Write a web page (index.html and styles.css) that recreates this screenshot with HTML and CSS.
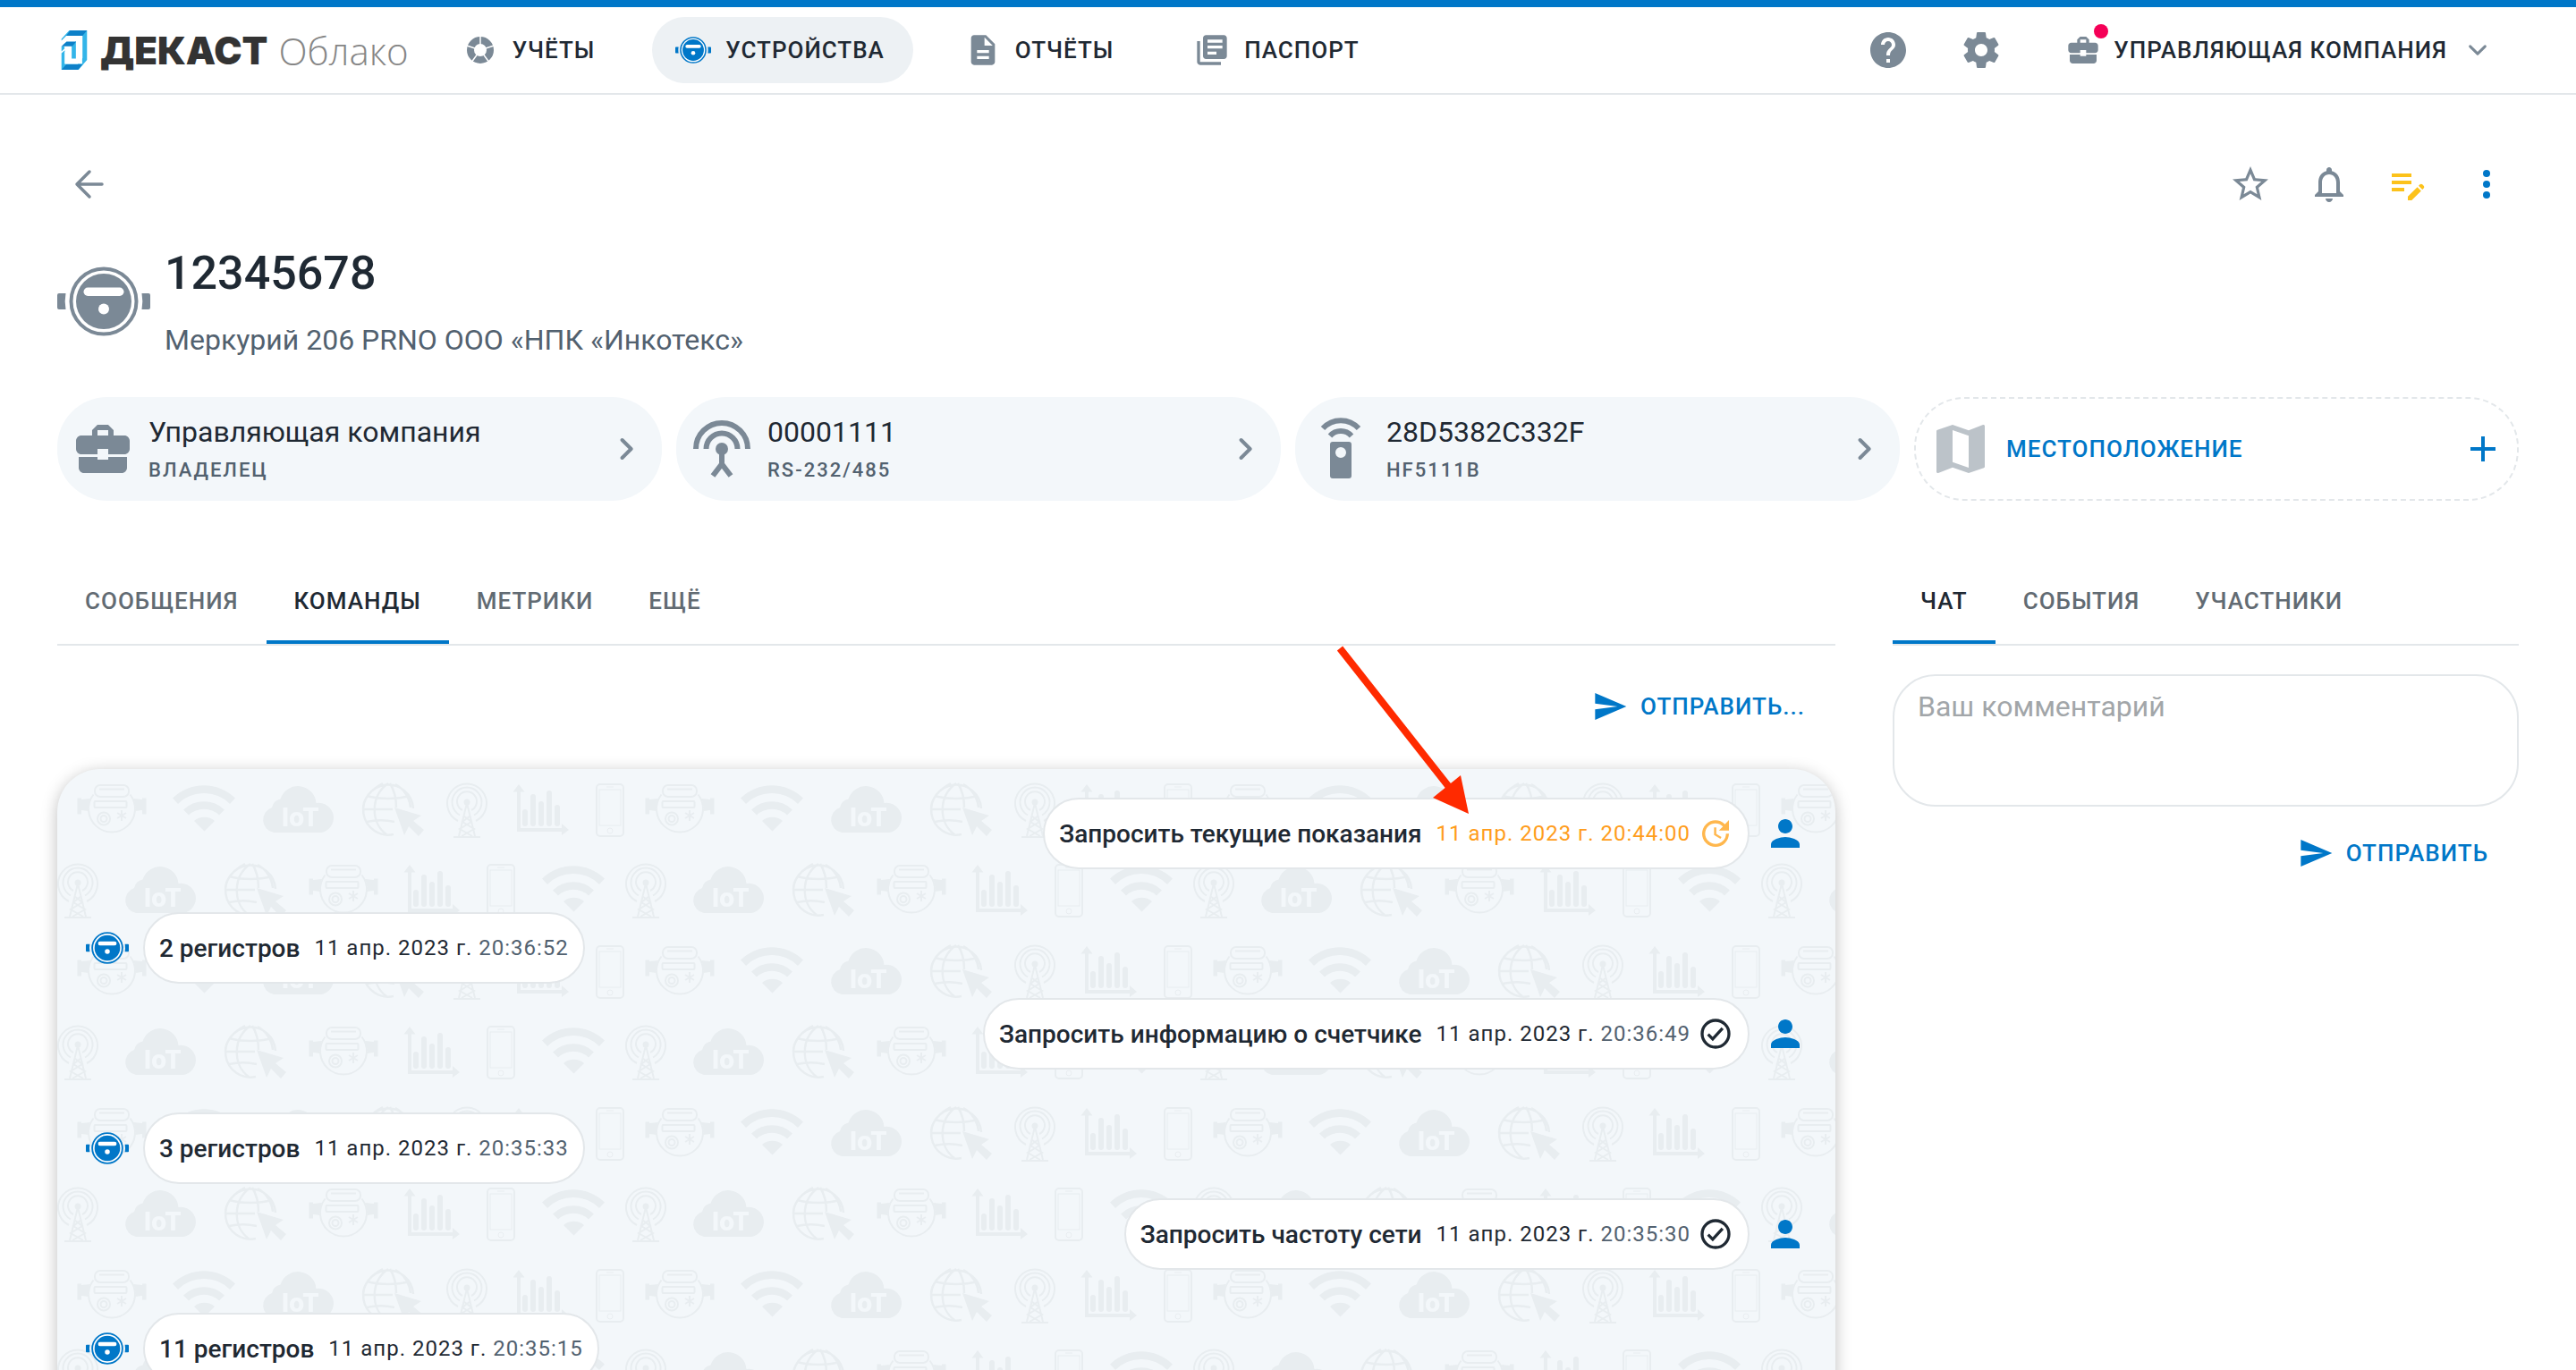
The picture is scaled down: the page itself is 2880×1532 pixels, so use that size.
FILE: index.html
```html
<!DOCTYPE html>
<html lang="ru">
<head>
<meta charset="utf-8">
<title>12345678 — ДЕКАСТ Облако</title>
<meta name="viewport" content="width=device-width, initial-scale=1">
<link rel="stylesheet" href="styles.css">
</head>
<body>
<svg class="sprite" aria-hidden="true">
  <symbol id="i-device" viewBox="0 0 104 78">
    <circle cx="52" cy="39" r="36.500" fill="#fff" stroke="currentColor" stroke-width="4"/>
    <circle cx="52" cy="39" r="31" fill="currentColor"/>
    <rect x="29.500" y="23.500" width="45" height="9.500" rx="4.700" fill="#fff"/>
    <circle cx="52" cy="47.500" r="6" fill="#fff"/>
    <path fill="currentColor" d="M9.500 30H2a2 2 0 0 0-2 2v14a2 2 0 0 0 2 2h7.500a50 50 0 0 1 0-18zM94.500 30h7.500a2 2 0 0 1 2 2v14a2 2 0 0 1-2 2h-7.500a50 50 0 0 0 0-18z"/>
  </symbol>
  <symbol id="i-case" viewBox="0 0 24 24"><path fill="currentColor" d="M10 16v-1H3.010L3 19c0 1.110.890 2 2 2h14c1.110 0 2-.890 2-2v-4h-7v1h-4zm10-9h-4.010V5l-2-2h-4l-2 2v2H4c-1.100 0-2 .900-2 2v3c0 1.110.890 2 2 2h6v-2h4v2h6c1.100 0 2-.900 2-2V9c0-1.100-.900-2-2-2zm-6 0h-4V5h4v2z"/></symbol>
  <symbol id="i-send" viewBox="0 0 24 24"><path fill="currentColor" d="M2.010 21L23 12 2.010 3 2 10l15 2-15 2z"/></symbol>
  <symbol id="i-right" viewBox="0 0 24 24"><path fill="none" stroke="currentColor" stroke-width="2" stroke-linecap="round" stroke-linejoin="round" d="M9.800 7l5 5-5 5"/></symbol>
  <symbol id="i-person" viewBox="0 0 24 24"><path fill="currentColor" d="M12 12c2.210 0 4-1.790 4-4s-1.790-4-4-4-4 1.790-4 4 1.790 4 4 4zm0 2c-2.670 0-8 1.340-8 4v2h16v-2c0-2.660-5.330-4-8-4z"/></symbol>
  <symbol id="i-done" viewBox="0 0 24 24"><circle cx="12" cy="12" r="9" fill="none" stroke="currentColor" stroke-width="2"/><path fill="none" stroke="currentColor" stroke-width="2" d="M7 12.400l3.100 3.100 6.600-7.200"/></symbol>
  <symbol id="i-wait" viewBox="0 0 24 24"><path fill="currentColor" d="M21 10.120h-6.780l2.740-2.820c-2.730-2.700-7.150-2.800-9.880-.100-2.730 2.710-2.730 7.080 0 9.790s7.150 2.710 9.880 0C18.320 15.650 19 14.080 19 12.100h2c0 1.980-.880 4.550-2.640 6.290-3.510 3.480-9.210 3.480-12.720 0-3.500-3.470-3.530-9.110-.020-12.580s9.140-3.470 12.650 0L21 3v7.120zM12.500 8v4.250l3.500 2.080-.720 1.210L11 13V8h1.500z"/></symbol>
</svg>

<div class="app">
  <header class="header">
    <a class="logo" href="#">
      <svg class="logo-mark" viewBox="0 0 85 131" aria-hidden="true">
        <path fill="#33b5e9" d="M0 28L26 0h59v98l-28 33H0V76l11-10v45h58V18H16L0 34z"/>
        <path fill="#fff" d="M16 18h54v74L54 112H11V72l17-14v36h6l18-1V36H16z"/>
        <path fill="#33b5e9" d="M34 52l14-16v58H34zM0 53v17l10-9v-8z"/>
        <path fill="#0d80c8" d="M16 18L29 0h56L70 18zM0 131l16-18h54l-15 18zM0 53l17-16h32L36 53z"/>
      </svg>
      <span class="logo-name">ДЕКАСТ</span>
      <span class="logo-sub">Облако</span>
    </a>
    <nav class="nav">
      <a class="nav-item" href="#">
        <svg class="icon-40" viewBox="0 0 40 40" aria-hidden="true"><circle cx="20" cy="20" r="11" fill="none" stroke="currentColor" stroke-width="8"/><path stroke="#fff" stroke-width="1.500" d="M20 20V4M20 20L4.800 15M20 20L10.600 33M20 20l9.400 13M20 20l15.200-5"/></svg>
        УЧЁТЫ</a>
      <a class="nav-item active" href="#" aria-current="page"><svg class="icon-40 blue" aria-hidden="true"><use href="#i-device"/></svg>УСТРОЙСТВА</a>
      <a class="nav-item" href="#">
        <svg class="icon-40" viewBox="0 0 24 24" aria-hidden="true"><path fill="currentColor" d="M14 2H6c-1.100 0-1.990.900-1.990 2L4 20c0 1.100.890 2 1.990 2H18c1.100 0 2-.900 2-2V8l-6-6zm2 16H8v-2h8v2zm0-4H8v-2h8v2zm-3-5V3.500L18.500 9H13z"/></svg>
        ОТЧЁТЫ</a>
      <a class="nav-item" href="#">
        <svg class="icon-40" viewBox="0 0 24 24" aria-hidden="true"><path fill="currentColor" d="M4 6H2v14c0 1.100.900 2 2 2h14v-2H4V6zm16-4H8c-1.100 0-2 .900-2 2v12c0 1.100.900 2 2 2h12c1.100 0 2-.900 2-2V4c0-1.100-.900-2-2-2zm-1 9H9V9h10v2zm-4 4H9v-2h6v2zm4-8H9V5h10v2z"/></svg>
        ПАСПОРТ</a>
    </nav>
    <div class="header-tools">
      <button class="tool" type="button" aria-label="Помощь"><svg class="icon-48" viewBox="0 0 24 24"><path fill="currentColor" d="M12 2C6.480 2 2 6.480 2 12s4.480 10 10 10 10-4.480 10-10S17.520 2 12 2zm1 17h-2v-2h2v2zm2.070-7.750l-.900.920C13.450 12.900 13 13.500 13 15h-2v-.500c0-1.100.450-2.100 1.170-2.830l1.240-1.260c.370-.360.590-.860.590-1.410 0-1.100-.900-2-2-2s-2 .900-2 2H8c0-2.210 1.790-4 4-4s4 1.790 4 4c0 .880-.360 1.680-.930 2.250z"/></svg></button>
      <button class="tool" type="button" aria-label="Настройки"><svg class="icon-48" viewBox="0 0 24 24"><path fill="currentColor" d="M19.430 12.980c.040-.320.070-.640.070-.980s-.030-.660-.070-.980l2.110-1.650c.190-.150.240-.420.120-.640l-2-3.460c-.120-.220-.390-.300-.610-.220l-2.490 1c-.520-.400-1.080-.730-1.690-.980l-.380-2.650C14.460 2.180 14.250 2 14 2h-4c-.250 0-.460.180-.490.420l-.380 2.650c-.610.250-1.170.590-1.690.980l-2.490-1c-.230-.090-.490 0-.610.220l-2 3.460c-.130.220-.070.490.120.640l2.110 1.650c-.040.320-.070.650-.070.980s.030.660.070.980l-2.110 1.650c-.190.150-.240.420-.120.640l2 3.460c.120.220.390.300.610.220l2.490-1c.520.400 1.080.730 1.690.980l.380 2.650c.030.240.240.420.490.420h4c.250 0 .460-.180.490-.420l.380-2.650c.610-.250 1.170-.590 1.690-.980l2.490 1c.230.090.490 0 .610-.220l2-3.460c.120-.220.070-.490-.120-.640l-2.110-1.650zM12 15.500c-1.930 0-3.500-1.570-3.500-3.500s1.570-3.500 3.500-3.500 3.500 1.570 3.500 3.500-1.570 3.500-3.500 3.500z"/></svg></button>
      <button class="account" type="button">
        <span class="account-icon"><svg class="icon-40" aria-hidden="true"><use href="#i-case"/></svg><span class="badge"></span></span>
        УПРАВЛЯЮЩАЯ КОМПАНИЯ
        <svg class="icon-40" viewBox="0 0 24 24" aria-hidden="true"><path fill="none" stroke="currentColor" stroke-width="1.800" stroke-linecap="round" stroke-linejoin="round" d="M7 9.500l5 5 5-5"/></svg>
      </button>
    </div>
  </header>

  <main class="main">
    <div class="toolbar">
      <button class="icon-btn" type="button" aria-label="Назад"><svg class="icon-48" viewBox="0 0 48 48"><path fill="none" stroke="currentColor" stroke-width="3.500" stroke-linecap="round" stroke-linejoin="round" d="M24 10L10 24l14 14M10 24h28"/></svg></button>
      <div class="toolbar-actions">
        <button class="icon-btn" type="button" aria-label="В избранное"><svg class="icon-48" viewBox="0 0 24 24"><path fill="currentColor" d="M22 9.240l-7.190-.620L12 2 9.190 8.630 2 9.240l5.460 4.730L5.820 21 12 17.270 18.180 21l-1.630-7.030L22 9.240zM12 15.400l-3.760 2.270 1-4.280-3.320-2.880 4.380-.380L12 6.100l1.710 4.040 4.380.380-3.320 2.880 1 4.280L12 15.400z"/></svg></button>
        <button class="icon-btn" type="button" aria-label="Уведомления"><svg class="icon-48" viewBox="0 0 24 24"><path fill="currentColor" d="M12 22c1.100 0 2-.900 2-2h-4c0 1.100.900 2 2 2zm6-6v-5c0-3.070-1.630-5.640-4.500-6.320V4c0-.830-.670-1.500-1.500-1.500s-1.500.670-1.500 1.500v.680C7.640 5.360 6 7.920 6 11v5l-2 2v1h16v-1l-2-2zm-2 1H8v-6c0-2.480 1.510-4.500 4-4.500s4 2.020 4 4.500v6z"/></svg></button>
        <button class="icon-btn yellow" type="button" aria-label="Редактировать"><svg class="icon-48" viewBox="0 0 24 24"><path fill="currentColor" d="M3 10h11v2H3v-2zm0-2h11V6H3v2zm0 8h7v-2H3v2zm15.010-3.130l.710-.710c.390-.390 1.020-.390 1.410 0l.710.710c.390.390.390 1.020 0 1.410l-.710.710-2.120-2.120zm-.710.710l-5.300 5.300V21h2.120l5.300-5.300-2.120-2.120z"/></svg></button>
        <button class="icon-btn blue" type="button" aria-label="Ещё"><svg class="icon-48" viewBox="0 0 24 24"><g fill="currentColor"><circle cx="12" cy="6" r="2"/><circle cx="12" cy="12" r="2"/><circle cx="12" cy="18" r="2"/></g></svg></button>
      </div>
    </div>

    <div class="device">
      <svg class="device-icon" aria-hidden="true"><use href="#i-device"/></svg>
      <div class="device-text">
        <h1 class="device-title">12345678</h1>
        <p class="device-model">Меркурий 206 PRNO ООО «НПК «Инкотекс»</p>
      </div>
    </div>

    <div class="cards">
      <a class="card" href="#">
        <span class="card-icon"><svg class="icon-72" aria-hidden="true"><use href="#i-case"/></svg></span>
        <span class="card-text"><span class="card-name">Управляющая компания</span><span class="card-kind">ВЛАДЕЛЕЦ</span></span>
        <svg class="icon-48" aria-hidden="true"><use href="#i-right"/></svg>
      </a>
      <a class="card" href="#">
        <span class="card-icon"><svg class="icon-72" viewBox="0 0 72 72" aria-hidden="true"><g fill="none" stroke="currentColor"><path stroke-width="6" d="M7 36a29 29 0 0 1 58 0M18.500 36a17.500 17.500 0 0 1 35 0"/><path stroke-width="6" d="M36 36v18M26 66l10-13 10 13"/></g><circle cx="36" cy="36" r="7" fill="currentColor"/></svg></span>
        <span class="card-text"><span class="card-name">00001111</span><span class="card-kind">RS-232/485</span></span>
        <svg class="icon-48" aria-hidden="true"><use href="#i-right"/></svg>
      </a>
      <a class="card" href="#">
        <span class="card-icon"><svg class="icon-72" viewBox="0 0 72 72" aria-hidden="true"><path fill="none" stroke="currentColor" stroke-width="6" d="M16 13a27 27 0 0 1 40 0M24 21.500a16 16 0 0 1 24 0"/><path fill="currentColor" fill-rule="evenodd" d="M27 28h18a3 3 0 0 1 3 3v35a3 3 0 0 1-3 3H27a3 3 0 0 1-3-3V31a3 3 0 0 1 3-3zm9 6a6 6 0 1 0 0 12 6 6 0 0 0 0-12z"/></svg></span>
        <span class="card-text"><span class="card-name">28D5382C332F</span><span class="card-kind">HF5111B</span></span>
        <svg class="icon-48" aria-hidden="true"><use href="#i-right"/></svg>
      </a>
      <button class="card card-add" type="button">
        <span class="card-icon pale"><svg class="icon-72" viewBox="0 0 24 24" aria-hidden="true"><path fill="currentColor" d="M20.500 3l-.160.030L15 5.100 9 3 3.360 4.900c-.210.070-.360.250-.360.480V20.500c0 .280.220.500.500.500l.160-.030L9 18.900l6 2.100 5.640-1.900c.210-.070.360-.250.360-.480V3.500c0-.280-.220-.500-.500-.500zM15 19l-6-2.110V5l6 2.110V19z"/></svg></span>
        <span class="card-text">МЕСТОПОЛОЖЕНИЕ</span>
        <svg class="icon-48" viewBox="0 0 24 24" aria-hidden="true"><path stroke="currentColor" stroke-width="2" d="M12 5v14M5 12h14"/></svg>
      </button>
    </div>

    <div class="columns">
      <section class="column">
        <div class="tabs" role="tablist">
          <button class="tab" type="button" role="tab">СООБЩЕНИЯ</button>
          <button class="tab active" type="button" role="tab" aria-selected="true">КОМАНДЫ</button>
          <button class="tab" type="button" role="tab">МЕТРИКИ</button>
          <button class="tab" type="button" role="tab">ЕЩЁ</button>
        </div>
        <div class="send-row above-feed">
          <button class="send" type="button"><svg class="icon-40" aria-hidden="true"><use href="#i-send"/></svg>ОТПРАВИТЬ...</button>
        </div>
        <div class="feed">
          <svg class="feed-bg" width="100%" height="100%" aria-hidden="true">
            <defs>
              <symbol id="p-meter" viewBox="0 0 80 60" overflow="visible">
                <g fill="none" stroke="currentColor" stroke-width="2">
                  <rect x="21" y="2" width="38" height="13" rx="6"/><path d="M26 6.500h28"/>
                  <rect x="20.500" y="20" width="36" height="7" rx="1"/>
                  <path d="M19.500 12.500a26 26 0 1 0 41 0"/>
                  <circle cx="31" cy="39.500" r="7"/><circle cx="31" cy="39.500" r="3.500"/>
                  <path d="M51 30v12M46 33l10 6M46 39l10-6"/>
                </g>
                <path fill="currentColor" d="M1.500 16.500h4.500v1.500l10-1a28 28 0 0 0-2 14l-8-1v4.500h-4.500zM78.500 16.500H74v1.500l-10-1a28 28 0 0 1 2 14l8-1v4.500h4.500z"/>
              </symbol>
              <symbol id="p-wifi" viewBox="0 0 80 60" overflow="visible"><path fill="currentColor" d="M5 17.500a50 50 0 0 1 70 0l-6 6.500a41 41 0 0 0-58 0zM17 30.500a33 33 0 0 1 46 0l-6 6a25 25 0 0 0-34 0zM29 43a18 18 0 0 1 23 0L40.500 54.500z"/></symbol>
              <symbol id="p-cloud" viewBox="0 0 90 60" overflow="visible">
                <path fill="currentColor" d="M18 55a14.500 14.500 0 0 1-2-28 12 12 0 0 1 9.500-9.500 20.500 20.500 0 0 1 40 4.500A16.500 16.500 0 0 1 71 55z"/>
                <text x="48" y="48" text-anchor="middle" class="iot">IoT</text>
              </symbol>
              <symbol id="p-globe" viewBox="0 0 80 62" overflow="visible">
                <g fill="none" stroke="currentColor" stroke-width="2.500">
                  <path d="M42 59a28 28 0 1 1 22-29M36 2c-20 14-20 44-2 57M38 2c5 8 7 18 7 27M30 2C14 10 8 22 8 30M44 3c10 5 16 16 17 26M12 16c14 4 34 4 48 0M7 31h34M12 45c10-2 22-2 31 0"/>
                </g>
                <path fill="currentColor" d="M43 29l30 9-9 6 12 10-6 7-11-11-5 10z"/>
              </symbol>
              <symbol id="p-tower" viewBox="0 0 50 64" overflow="visible">
                <g fill="none" stroke="currentColor" stroke-width="2">
                  <path d="M15 44a22 22 0 1 1 20 0M17 37.500a16.500 16.500 0 1 1 16 0M20 32a11 11 0 1 1 10 0M25 24l-9 37M25 24l9 37M21 38l9 7-13 8 14 8M29 38l-9 7 13 8-14 8"/>
                  <path d="M10 62h30"/>
                </g>
                <circle cx="25" cy="23" r="3.500" fill="currentColor"/>
              </symbol>
              <symbol id="p-chart" viewBox="0 0 64 64" overflow="visible">
                <path fill="currentColor" d="M7 2l6.500 8.500H9V51h46v-5l8 7-8 6v-4H5V10.500H.500z"/>
                <path stroke="currentColor" stroke-width="6" stroke-linecap="round" d="M14 33v13M23 16v30M32 24v22M41 12v34M50 28v18"/>
              </symbol>
              <symbol id="p-phone" viewBox="0 0 34 62" overflow="visible">
                <g fill="none" stroke="currentColor"><rect x="2" y="2" width="30" height="58" rx="4" stroke-width="2"/><rect x="5" y="8" width="24" height="40"/><path d="M13 5h8"/><circle cx="17" cy="54" r="3"/></g>
              </symbol>
              <pattern id="wallpaper" width="635" height="181" patternUnits="userSpaceOnUse">
                <g class="ink">
                  <use href="#p-meter" x="21" y="16" width="80" height="60"/>
                  <use href="#p-wifi" x="124" y="15" width="80" height="60"/>
                  <use href="#p-cloud" x="224" y="16" width="90" height="60"/>
                  <use href="#p-globe" x="334" y="14" width="80" height="62"/>
                  <use href="#p-tower" x="433" y="14" width="50" height="64"/>
                  <use href="#p-chart" x="509" y="15" width="64" height="64"/>
                  <use href="#p-phone" x="601" y="15" width="34" height="62"/>
                  <use href="#p-tower" x="-2" y="104" width="50" height="64"/>
                  <use href="#p-cloud" x="70" y="106" width="90" height="60"/>
                  <use href="#p-globe" x="180" y="104" width="80" height="62"/>
                  <use href="#p-meter" x="280" y="106" width="80" height="60"/>
                  <use href="#p-chart" x="387" y="105" width="64" height="64"/>
                  <use href="#p-phone" x="479" y="105" width="34" height="62"/>
                  <use href="#p-wifi" x="537" y="105" width="80" height="60"/>
                </g>
              </pattern>
            </defs>
            <rect width="100%" height="100%" fill="url(#wallpaper)"/>
          </svg>
          <div class="msg out">
            <div class="bubble"><b class="msg-name">Запросить текущие показания</b><time class="msg-date waiting">11 апр. 2023 г. 20:44:00</time><svg class="icon-40 waiting-icon" aria-hidden="true"><use href="#i-wait"/></svg></div>
            <svg class="icon-48 blue" aria-hidden="true"><use href="#i-person"/></svg>
          </div>
          <div class="msg in">
            <svg class="icon-48 blue" aria-hidden="true"><use href="#i-device"/></svg>
            <div class="bubble"><b class="msg-name">2 регистров</b><time class="msg-date">11 апр. 2023 г. <span class="msg-time">20:36:52</span></time></div>
          </div>
          <div class="msg out">
            <div class="bubble"><b class="msg-name">Запросить информацию о счетчике</b><time class="msg-date">11 апр. 2023 г. <span class="msg-time">20:36:49</span></time><svg class="icon-40" aria-hidden="true"><use href="#i-done"/></svg></div>
            <svg class="icon-48 blue" aria-hidden="true"><use href="#i-person"/></svg>
          </div>
          <div class="msg in">
            <svg class="icon-48 blue" aria-hidden="true"><use href="#i-device"/></svg>
            <div class="bubble"><b class="msg-name">3 регистров</b><time class="msg-date">11 апр. 2023 г. <span class="msg-time">20:35:33</span></time></div>
          </div>
          <div class="msg out">
            <div class="bubble"><b class="msg-name">Запросить частоту сети</b><time class="msg-date">11 апр. 2023 г. <span class="msg-time">20:35:30</span></time><svg class="icon-40" aria-hidden="true"><use href="#i-done"/></svg></div>
            <svg class="icon-48 blue" aria-hidden="true"><use href="#i-person"/></svg>
          </div>
          <div class="msg in">
            <svg class="icon-48 blue" aria-hidden="true"><use href="#i-device"/></svg>
            <div class="bubble"><b class="msg-name">11 регистров</b><time class="msg-date">11 апр. 2023 г. <span class="msg-time">20:35:15</span></time></div>
          </div>
        </div>
        <svg class="pointer" viewBox="0 0 160 192" aria-hidden="true"><path stroke="#ff2a00" stroke-width="8" d="M10 4l122 155"/><path fill="#ff2a00" d="M154 189l-40-18 31-25z"/></svg>
      </section>

      <section class="column">
        <div class="tabs" role="tablist">
          <button class="tab active" type="button" role="tab" aria-selected="true">ЧАТ</button>
          <button class="tab" type="button" role="tab">СОБЫТИЯ</button>
          <button class="tab" type="button" role="tab">УЧАСТНИКИ</button>
        </div>
        <textarea class="comment" aria-label="Ваш комментарий" placeholder="Ваш комментарий"></textarea>
        <div class="send-row">
          <button class="send" type="button"><svg class="icon-40" aria-hidden="true"><use href="#i-send"/></svg>ОТПРАВИТЬ</button>
        </div>
      </section>
    </div>
  </main>
</div>
</body>
</html>
```
FILE: styles.css
```css
:root {
  --blue: #0077c8;
  --text: #1f2933;
  --muted: #52616f;
  --icon: #7b8996;
  --line: #e3e7ea;
  --soft: #f3f7fa;
}

* { box-sizing: border-box; }

body {
  margin: 0;
  background: #fff;
  color: var(--text);
  font-family: Roboto, "Noto Sans", sans-serif;
  font-size: 26px;
}

button, textarea { font: inherit; color: inherit; }
button { border: 0; background: none; padding: 0; cursor: pointer; }
a { color: inherit; text-decoration: none; }
svg { display: block; flex: none; }

.sprite { position: absolute; width: 0; height: 0; }
.app { height: 100vh; overflow: hidden; }
.blue { color: var(--blue); }
.icon-40 { width: 40px; height: 40px; }
.icon-48 { width: 48px; height: 48px; }
.icon-72 { width: 72px; height: 72px; }

/* Header */
.header {
  display: flex;
  align-items: center;
  height: 106px;
  padding: 0 64px;
  border-top: 8px solid var(--blue);
  border-bottom: 2px solid var(--line);
  font-weight: 500;
}
.logo { display: flex; align-items: center; margin-left: 4px; }
.logo-mark { width: 30px; height: 44px; }
.logo-name {
  margin: 0 12px 0 14px;
  color: #333;
  font-family: Inter, sans-serif;
  font-size: 42px;
  font-weight: 900;
}
.logo-sub {
  color: #868686;
  font-family: "Open Sans", sans-serif;
  font-size: 42px;
  font-weight: 300;
}
.nav { display: flex; gap: 32px; margin-left: 34px; }
.nav-item {
  display: flex;
  align-items: center;
  gap: 16px;
  height: 74px;
  padding: 0 32px 0 26px;
  border-radius: 37px;
  letter-spacing: 1px;
}
.nav-item.active { background: #edf1f4; }
.nav-item svg:not(.blue), .tool, .account svg { color: var(--icon); }
.header-tools { display: flex; align-items: center; gap: 56px; margin-left: auto; padding-right: 26px; }
.account { display: flex; align-items: center; gap: 14px; margin-left: 14px; font-weight: 500; letter-spacing: 1px; }
.account-icon { position: relative; }
.badge { position: absolute; top: -9px; right: -8px; width: 16px; height: 16px; border-radius: 50%; background: #f50057; }

/* Device heading */
.main { padding: 64px 64px 0; }
.toolbar, .toolbar-actions { display: flex; justify-content: space-between; }
.toolbar-actions { gap: 16px; }
.icon-btn { display: grid; place-items: center; width: 72px; height: 72px; color: var(--icon); }
.icon-btn.yellow { color: #fcc21b; }
.icon-btn.blue { color: var(--blue); }
.device { display: flex; align-items: center; gap: 16px; margin: 32px 0 44px; }
.device-icon { width: 104px; height: 78px; color: var(--icon); }
.device-title { margin: 0 0 22px; font-size: 52px; font-weight: 500; line-height: 64px; }
.device-model { margin: 0; color: var(--muted); font-size: 32px; line-height: 40px; }

/* Cards */
.cards { display: grid; grid-template-columns: repeat(4, 1fr); gap: 16px; }
.card {
  display: flex;
  align-items: center;
  height: 116px;
  padding: 0 16px 0 15px;
  border-radius: 56px;
  background: var(--soft);
  color: var(--icon);
}
.card-icon { margin-right: 15px; }
.card-icon.pale { color: #bcc3c9; }
.card-text { flex: 1; text-align: left; }
.card-name { display: block; color: var(--text); font-size: 32px; line-height: 46px; }
.card-kind { display: block; margin-top: 2px; color: var(--muted); font-size: 22px; font-weight: 500; line-height: 36px; letter-spacing: 2px; }
.card-add { padding: 0 14px; border: 2px dashed var(--line); background: none; color: var(--blue); font-weight: 500; letter-spacing: 1px; }

/* Columns and tabs */
.columns { display: grid; grid-template-columns: 497fr 175fr; gap: 64px; margin-top: 64px; }
.column { position: relative; min-width: 0; }
.tabs { display: flex; border-bottom: 2px solid var(--line); }
.tab {
  height: 96px;
  padding: 4px 31px 0;
  border-bottom: 4px solid transparent;
  color: #626b73;
  font-weight: 500;
  letter-spacing: 1px;
}
.tab.active { border-color: var(--blue); color: var(--text); }
.send-row { display: flex; justify-content: flex-end; }
.above-feed { margin: 32px 0 34px; }
.send { display: flex; align-items: center; gap: 14px; height: 72px; padding: 0 34px; color: var(--blue); font-weight: 500; letter-spacing: 1px; }

/* Command feed */
.feed {
  position: relative;
  display: flex;
  flex-direction: column;
  padding: 32px 32px 48px;
  border-radius: 48px;
  background: var(--soft);
  box-shadow: 0 4px 18px rgba(0, 0, 0, .26);
}
.feed-bg { position: absolute; inset: 0; border-radius: 48px; }
.ink { color: #e8edf0; }
.iot { fill: var(--soft); font-family: Inter, sans-serif; font-size: 28px; font-weight: 800; }
.msg { position: relative; display: flex; align-items: center; gap: 16px; }
.msg.out { justify-content: flex-end; }
.msg.in { margin: 48px 0 16px; }
.bubble {
  display: flex;
  align-items: center;
  height: 80px;
  padding: 0 16px;
  border: 2px solid var(--line);
  border-radius: 40px;
  background: #fff;
}
.msg-name { margin-right: 16px; font-size: 28px; font-weight: 500; }
.msg-date { font-size: 24px; letter-spacing: 1px; }
.msg-time { color: var(--muted); }
.bubble .icon-40 { margin-left: 8px; }
.waiting { color: #ff9d1c; }
.waiting-icon { color: #ffb74d; }
.pointer { position: absolute; top: 97px; right: 404px; width: 160px; height: 192px; }

/* Chat */
.comment {
  display: block;
  width: 100%;
  height: 148px;
  margin: 32px 0 16px;
  padding: 14px 26px;
  border: 2px solid var(--line);
  border-radius: 48px;
  background: #fff;
  font-size: 32px;
  line-height: 40px;
  resize: none;
}
.comment::placeholder { color: #a2a6a9; opacity: 1; }
```
